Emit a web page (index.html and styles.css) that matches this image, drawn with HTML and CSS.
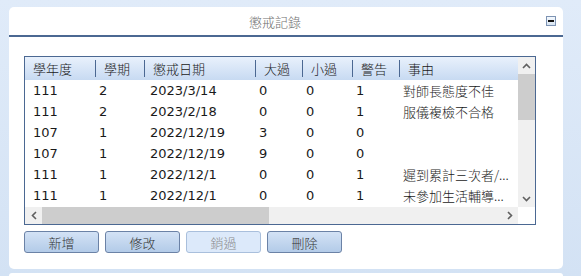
FILE: index.html
```html
<!DOCTYPE html>
<html lang="zh-Hant">
<head>
    <meta charset="UTF-8">
    <title>懲戒記錄</title>
    <link rel="stylesheet" href="styles.css">
</head>
<body>

    <!-- Discipline record panel -->
    <div class="panel">
        <div class="panel-head">
            <div class="panel-title">懲戒記錄</div>
            <span class="collapse-btn"></span>
        </div>

        <div class="panel-body">
            <div class="grid">
                <div class="grid-top">
                    <div class="grid-table">
                        <div class="row head">
                            <div class="c c1">學年度</div>
                            <div class="c c2">學期</div>
                            <div class="c c3">懲戒日期</div>
                            <div class="c c4">大過</div>
                            <div class="c c5">小過</div>
                            <div class="c c6">警告</div>
                            <div class="c c7">事由</div>
                        </div>
                        <div class="row">
                            <div class="c c1">111</div><div class="c c2">2</div><div class="c c3">2023/3/14</div>
                            <div class="c c4">0</div><div class="c c5">0</div><div class="c c6">1</div><div class="c c7">對師長態度不佳</div>
                        </div>
                        <div class="row">
                            <div class="c c1">111</div><div class="c c2">2</div><div class="c c3">2023/2/18</div>
                            <div class="c c4">0</div><div class="c c5">0</div><div class="c c6">1</div><div class="c c7">服儀複檢不合格</div>
                        </div>
                        <div class="row">
                            <div class="c c1">107</div><div class="c c2">1</div><div class="c c3">2022/12/19</div>
                            <div class="c c4">3</div><div class="c c5">0</div><div class="c c6">0</div><div class="c c7"></div>
                        </div>
                        <div class="row">
                            <div class="c c1">107</div><div class="c c2">1</div><div class="c c3">2022/12/19</div>
                            <div class="c c4">9</div><div class="c c5">0</div><div class="c c6">0</div><div class="c c7"></div>
                        </div>
                        <div class="row">
                            <div class="c c1">111</div><div class="c c2">1</div><div class="c c3">2022/12/1</div>
                            <div class="c c4">0</div><div class="c c5">0</div><div class="c c6">1</div><div class="c c7">遲到累計三次者/...</div>
                        </div>
                        <div class="row">
                            <div class="c c1">111</div><div class="c c2">1</div><div class="c c3">2022/12/1</div>
                            <div class="c c4">0</div><div class="c c5">0</div><div class="c c6">1</div><div class="c c7">未參加生活輔導...</div>
                        </div>
                    </div>

                    <div class="vscroll">
                        <div class="arrow"><svg width="9" height="6" viewBox="0 0 9 6"><path d="M1 5 L4.5 1.5 L8 5" fill="none" stroke="#606060" stroke-width="1.6"/></svg></div>
                        <div class="vthumb"></div>
                        <div class="vtrack"></div>
                        <div class="arrow"><svg width="9" height="6" viewBox="0 0 9 6"><path d="M1 1 L4.5 4.5 L8 1" fill="none" stroke="#606060" stroke-width="1.6"/></svg></div>
                    </div>
                </div>

                <div class="grid-bottom">
                    <div class="hscroll">
                        <div class="arrow"><svg width="6" height="9" viewBox="0 0 6 9"><path d="M5 1 L1.5 4.5 L5 8" fill="none" stroke="#606060" stroke-width="1.6"/></svg></div>
                        <div class="hthumb"></div>
                        <div class="htrack"></div>
                        <div class="arrow"><svg width="6" height="9" viewBox="0 0 6 9"><path d="M1 1 L4.5 4.5 L1 8" fill="none" stroke="#606060" stroke-width="1.6"/></svg></div>
                    </div>
                    <div class="corner"></div>
                </div>
            </div>

            <div class="buttons">
                <button class="btn">新增</button>
                <button class="btn">修改</button>
                <button class="btn disabled">銷過</button>
                <button class="btn">刪除</button>
            </div>
        </div>
    </div>

    <div class="panel next"></div>

</body>
</html>
```

FILE: styles.css
```css
html, body {
    height: 276px;
    overflow: hidden;
}
body {
    margin: 0;
    padding: 7px 18px 0 9px;
    background: linear-gradient(180deg, #e0ebf9, #d3e2f4);
    font-family: "DejaVu Sans", "Noto Sans CJK TC", sans-serif;
    font-size: 13px;
    color: #1a1a1a;
    box-sizing: border-box;
}
.panel {
    width: 554px;
    height: 262px;
    background: white;
    border-radius: 5px;
}
.panel.next {
    margin-top: 4px;
    height: 3px;
    border-radius: 5px 5px 0 0;
}
.panel-head {
    display: flex;
    align-items: center;
    height: 28px;
    padding-right: 7px;
    border-bottom: 2px solid #4b6892;
}
.panel-title {
    flex: 1;
    text-align: center;
    color: #707070;
    font-family: "Noto Sans CJK TC", sans-serif;
    font-weight: 300;
    font-size: 13px;
    margin-right: 5px;
}
.collapse-btn {
    width: 8px;
    height: 8px;
    border: 1px solid #7d93b3;
    background: linear-gradient(#f4f8fd, #d8e4f2);
    position: relative;
}
.collapse-btn::after {
    content: "";
    position: absolute;
    left: 1px;
    right: 1px;
    top: 3px;
    height: 2px;
    background: #111;
}
.panel-body {
    padding: 19px 0 0 15px;
}
.grid {
    width: 510px;
    border: 1px solid #4b6892;
}
.grid-top, .grid-bottom {
    display: flex;
}
.grid-table {
    width: 493px;
    height: 150px;
    overflow: hidden;
}
.row {
    display: flex;
    height: 21px;
    align-items: center;
    white-space: nowrap;
}
.row.head {
    height: 23px;
    background: linear-gradient(#e9f1fc, #c7daf2);
}
.c {
    flex: none;
    box-sizing: border-box;
    padding-left: 4px;
    overflow: hidden;
}
.c1 { width: 70px; padding-left: 8px; }
.c2 { width: 49px; }
.c3 { width: 111px; padding-left: 6px; }
.c4 { width: 47px; }
.c5 { width: 50px; }
.c6 { width: 47px; }
.c7 { width: 119px; }
.head .c {
    font-family: "Noto Sans CJK TC", sans-serif;
    font-weight: 300;
    padding-left: 8px;
    line-height: 17px;
}
.head .c + .c {
    border-left: 1px solid #4b6892;
}
.row .c7 {
    font-family: "Noto Sans CJK TC", sans-serif;
    font-weight: 300;
}
.vscroll {
    width: 17px;
    height: 150px;
    display: flex;
    flex-direction: column;
    background: #f0f0f0;
}
.arrow {
    width: 17px;
    height: 17px;
    flex: none;
    display: flex;
    align-items: center;
    justify-content: center;
    background: #f0f0f0;
}
.vthumb {
    height: 46px;
    background: #cdcdcd;
}
.vtrack {
    flex: 1;
}
.hscroll {
    width: 493px;
    height: 17px;
    display: flex;
    background: #f0f0f0;
}
.hthumb {
    width: 227px;
    background: #cdcdcd;
}
.htrack {
    flex: 1;
}
.corner {
    width: 17px;
    height: 17px;
    background: white;
}
.buttons {
    display: flex;
    gap: 6px;
    margin-top: 6px;
}
.btn {
    width: 75px;
    height: 22px;
    padding: 0;
    border: 1px solid #6b82a6;
    border-radius: 3px;
    background: linear-gradient(#d3e2f5, #b3cbe8);
    font-family: "Noto Sans CJK TC", sans-serif;
    font-weight: 300;
    font-size: 13px;
    color: #333;
}
.btn.disabled {
    border-color: #a9bfdc;
    background: #dce9fa;
    color: #8a8a8a;
}
```
